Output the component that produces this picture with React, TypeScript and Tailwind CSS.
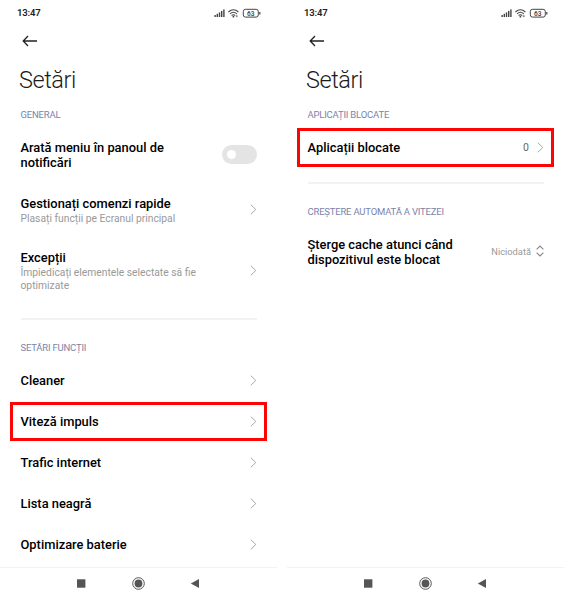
import type { ReactNode } from 'react';

function StatusBar() {
  return (
    <div className="flex h-[26px] shrink-0 items-center justify-between pl-[17px] pr-[16px]">
      <span className="text-[9.5px] font-semibold leading-[12px] tracking-[-0.15px] text-[#222]">13:47</span>
      <svg width="47" height="12" viewBox="0 0 47 12" fill="none">
        <g fill="#444">
          <rect x="0.4" y="8" width="1.4" height="2" />
          <rect x="2.6" y="6.8" width="1.4" height="3.2" />
          <rect x="4.8" y="5.4" width="1.4" height="4.6" />
          <rect x="7" y="3.9" width="1.4" height="6.1" />
          <rect x="9.2" y="2.4" width="1.4" height="7.6" />
        </g>
        <g stroke="#444" strokeWidth="1.1">
          <path d="M14.4 5Q19.4 0.6 24.4 5" />
          <path d="M16 6.8Q19.4 3.8 22.8 6.8" />
          <path d="M17.6 8.5Q19.4 7 21.2 8.5" />
        </g>
        <circle cx="19.4" cy="9.7" r="0.9" fill="#444" />
        <path d="M22.8 7.8v2.4M21.8 9.2h2" stroke="#666" strokeWidth="0.7" />
        <rect x="29.3" y="2.3" width="15" height="7.8" rx="2.2" stroke="#444" />
        <path d="M45.8 5v2.4" stroke="#444" strokeWidth="1.2" />
        <text x="36.8" y="8.6" textAnchor="middle" fontSize="6.5" fontWeight="600" fill="#444">63</text>
      </svg>
    </div>
  );
}

function Header() {
  return (
    <>
      <div className="flex h-[30px] shrink-0 items-center pl-[22px]">
        <svg width="16" height="12" viewBox="0 0 16 12" fill="none" stroke="#222" strokeWidth="1.3">
          <path d="M15 6H1.2M6 1L1.2 6L6 11" />
        </svg>
      </div>
      <h1 className="flex h-[46px] shrink-0 items-center pl-[19px] pt-[2px] text-[23.5px] font-light leading-[28px] tracking-[-0.45px] text-[#1c1c1c]">
        Setări
      </h1>
    </>
  );
}

function NavBar() {
  return (
    <div className="mt-auto flex h-[33px] shrink-0 border-t border-[#f3f3f3]">
      <svg width="277" height="32" viewBox="0 0 277 32">
        <rect x="77" y="11.3" width="8.4" height="8.4" fill="#555" />
        <circle cx="138.5" cy="15.5" r="5.8" fill="none" stroke="#555" strokeWidth="1" />
        <circle cx="138.5" cy="15.5" r="3.9" fill="#555" />
        <path d="M190.8 15.5L199 11v9z" fill="#555" />
      </svg>
    </div>
  );
}

function Chevron() {
  return (
    <svg width="7" height="11" viewBox="0 0 7 11" fill="none" stroke="#aaa" strokeWidth="1" className="shrink-0">
      <path d="M0.8 0.7L5.8 5.5L0.8 10.3" />
    </svg>
  );
}

function Sorter() {
  return (
    <svg width="8" height="12" viewBox="0 0 8 12" fill="none" stroke="#888" strokeWidth="1.1" className="-mt-px shrink-0">
      <path d="M0.6 4.3L4 1L7.4 4.3M0.6 7.7L4 11L7.4 7.7" />
    </svg>
  );
}

function Phone({ children }: { children: ReactNode }) {
  return (
    <section className="flex h-[600px] w-[277px] flex-col">
      <StatusBar />
      <Header />
      {children}
      <NavBar />
    </section>
  );
}

function Heading({ className, children }: { className: string; children: ReactNode }) {
  return (
    <h2 className={`flex shrink-0 items-center pl-[20.5px] pt-[2px] text-[9.5px] leading-[12px] tracking-[-0.2px] text-[#7c84a8] ${className}`}>
      {children}
    </h2>
  );
}

function Divider({ className }: { className: string }) {
  return (
    <div className={`flex shrink-0 items-center px-[20.5px] ${className}`}>
      <div className="h-[2px] w-[236px] bg-[#f2f2f2]" />
    </div>
  );
}

function Row({ className, title, sub, right }: { className: string; title: ReactNode; sub?: ReactNode; right: ReactNode }) {
  return (
    <div className={`relative flex shrink-0 items-center justify-between pl-[20.5px] pr-[20px] ${className}`}>
      <div className={`whitespace-nowrap ${sub ? 'pt-[2px]' : ''}`}>
        <div className="text-[12.88px] font-medium leading-[15px] text-black">{title}</div>
        {sub && <div className="pt-[2px] text-[10.3px] leading-[12.3px] text-[#999]">{sub}</div>}
      </div>
      {right}
    </div>
  );
}

function Frame({ className }: { className: string }) {
  return <span className={`pointer-events-none absolute left-[10px] w-[257px] border-[3px] border-[#fb0505] ${className}`} />;
}

export default function App() {
  return (
    <main className="flex h-[600px] w-[564px] gap-[10px] overflow-hidden bg-white font-[Roboto,sans-serif]">
      <Phone>
        <Heading className="h-[24px]">GENERAL</Heading>
        <Row
          className="h-[57px]"
          title={<>Arată meniu în panoul de<br />notificări</>}
          right={
            <span className="flex h-[19px] w-[35px] items-center rounded-full bg-[#e4e4e4] pl-[5px]">
              <span className="size-[9px] rounded-full bg-white" />
            </span>
          }
        />
        <Row className="h-[53px]" title="Gestionați comenzi rapide" sub="Plasați funcții pe Ecranul principal" right={<Chevron />} />
        <Row
          className="h-[68px]"
          title="Excepții"
          sub={<>Împiedicați elementele selectate să fie<br />optimizate</>}
          right={<Chevron />}
        />
        <Divider className="h-[30px]" />
        <Heading className="h-[25.5px]">SETĂRI FUNCȚII</Heading>
        <Row className="h-[41px]" title="Cleaner" right={<Chevron />} />
        <Row className="h-[41px]" title="Viteză impuls" right={<><Chevron /><Frame className="top-[1.5px] h-[39px]" /></>} />
        <Row className="h-[41px]" title="Trafic internet" right={<Chevron />} />
        <Row className="h-[41px]" title="Lista neagră" right={<Chevron />} />
        <Row className="h-[41px]" title="Optimizare baterie" right={<Chevron />} />
      </Phone>
      <Phone>
        <Heading className="h-[24px]">APLICAȚII BLOCATE</Heading>
        <Row
          className="h-[43px]"
          title="Aplicații blocate"
          right={
            <>
              <span className="flex items-center gap-[8px] text-[10.5px] leading-[12px] text-[#666]">0<Chevron /></span>
              <Frame className="top-[2px] h-[39px]" />
            </>
          }
        />
        <Divider className="h-[28px]" />
        <Heading className="h-[28px]">CREȘTERE AUTOMATĂ A VITEZEI</Heading>
        <Row
          className="h-[53px]"
          title={<>Șterge cache atunci când<br />dispozitivul este blocat</>}
          right={<span className="flex items-center gap-[5px] text-[9.3px] leading-[12px] text-[#999]">Niciodată<Sorter /></span>}
        />
      </Phone>
    </main>
  );
}
